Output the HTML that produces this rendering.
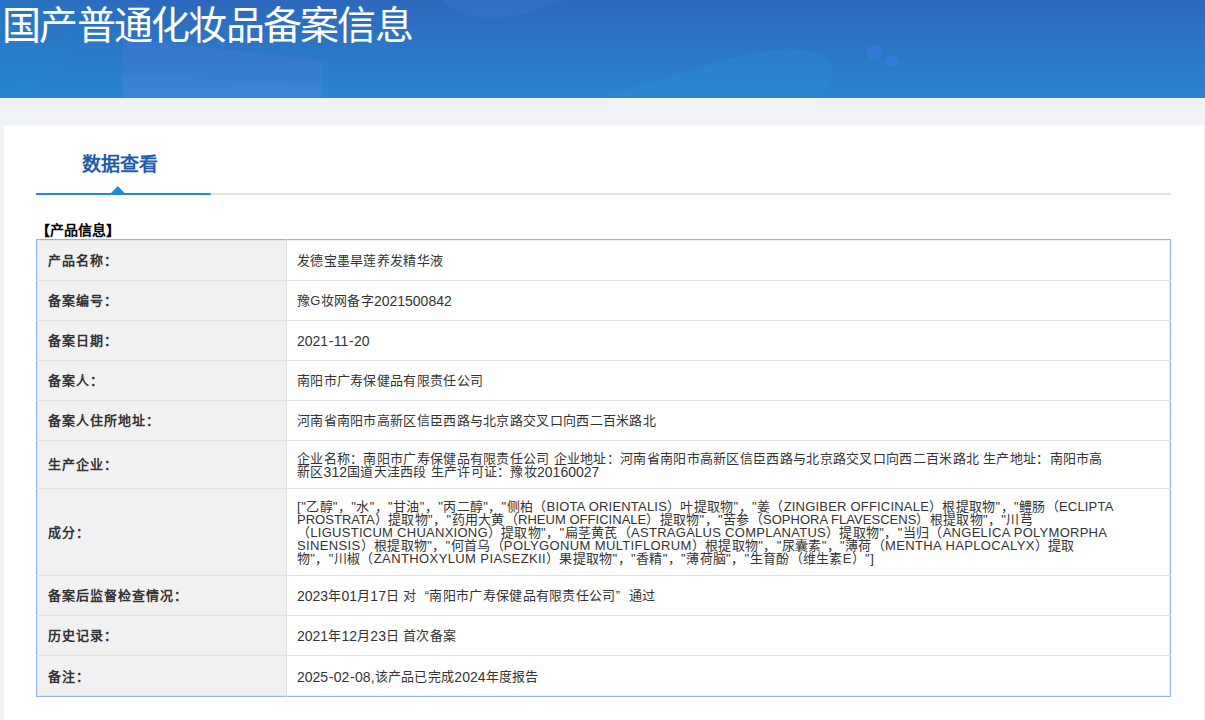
<!DOCTYPE html>
<html lang="zh-CN"><head><meta charset="utf-8">
<style>
*{margin:0;padding:0;box-sizing:border-box}
html,body{width:1205px;height:720px;overflow:hidden}
body{background:#eff3f6;font-family:"Liberation Sans",sans-serif;color:#333;position:relative;text-spacing-trim:space-all}
.hd{position:absolute;left:0;top:0;width:1205px;height:98px;overflow:hidden;
background:linear-gradient(180deg,#2d68bc 0%,#2b79c9 55%,#2a84d1 100%)}
.hd svg{position:absolute;left:0;top:0}
.hd h1{position:absolute;left:2px;top:4px;font-size:39px;letter-spacing:-1.75px;font-weight:normal;color:#fff;line-height:44px;white-space:nowrap}
.panel{position:absolute;left:4px;top:125px;width:1200px;height:620px;background:#fff}
.tabs{position:absolute;left:32px;top:68px;width:1135px;height:2px;background:#e4e4e4}
.tab{position:absolute;left:0;top:0;width:175px;height:2px;background:linear-gradient(90deg,#2a85d3 174px,#3fd2ef 174px)}
.tri{position:absolute;left:75px;top:-7px;display:block}
.tabt{position:absolute;left:78px;top:28px;font-size:19px;font-weight:bold;color:#1f5da8;line-height:24px;white-space:nowrap}
.sec{position:absolute;left:32px;top:96px;font-size:14px;font-weight:bold;color:#000;line-height:18px;white-space:nowrap}
table{position:absolute;left:32px;top:114px;width:1135px;border-collapse:collapse;border:1px solid #92b4e4}
.tbin{position:absolute;left:33px;top:115px;width:1133px;height:456px;border:1px solid rgba(200,195,185,0.25);pointer-events:none}
td{line-height:13px;padding:0;font-size:13px;white-space:nowrap}
tr+tr td{border-top:1px solid #e2e2e2}
td.l{width:250px;background:#f1f1f1;font-weight:bold;font-size:13px;letter-spacing:1.05px;color:#333;padding-left:11px;border-right:1px solid #e2e2e2}
td.v{padding-left:10px;color:#333}
.ln{letter-spacing:0.3px}
.ln i{font-style:normal}
.ln i.d{font-size:14px;letter-spacing:0px;position:relative;top:1px}
.ln i.d u{text-decoration:none;margin:0 0.5px}
.ln{--ax:0px}
.ln i.a{font-size:13px;letter-spacing:calc(0.24px + var(--ax))}
.ln i.q{font-size:13px;letter-spacing:0.47px;margin-left:0px}
.ln i.k{font-size:13px;letter-spacing:0.5px}
.ln b{font-weight:normal;display:inline-block;width:13px}
.ln b.ql{text-align:right}
.ln b.qr{text-align:left}
</style></head><body>
<div class="hd">
<svg width="1205" height="98" viewBox="0 0 1205 98">
<defs><linearGradient id='lt' x1='0' y1='0' x2='1' y2='0'><stop offset='0' stop-color='#1f8ad0' stop-opacity='0.35'/><stop offset='1' stop-color='#1f8ad0' stop-opacity='0'/></linearGradient></defs><rect x='0' y='0' width='160' height='98' fill='url(#lt)'/><polygon points='123,38 322,60 322,98 123,98' fill='rgba(100,125,235,0.2)'/><polygon points='123,75 322,85 322,98 123,98' fill='rgba(90,150,240,0.12)'/><path d='M442,0 C455,12 470,18 492,18 C520,18 545,8 566,0 Z' fill='rgba(70,130,215,0.22)'/><path d='M600,98 C680,75 740,50 790,49 C825,49 838,65 832,80 C828,90 822,95 815,98 Z' fill='rgba(45,140,215,0.35)'/><circle cx='874' cy='53' r='7.5' fill='rgba(60,125,230,0.55)'/><circle cx='892' cy='61.5' r='6' fill='rgba(60,125,230,0.55)'/>
</svg>
<h1>国产普通化妆品备案信息</h1></div>
<div class="panel">
  <div class="tabt">数据查看</div>
  <div class="tabs"><div class="tab"><svg class="tri" width="14" height="7" viewBox="0 0 14 7"><polygon points="0,7 6.8,0 13.6,7" fill="#2589d8"/></svg></div></div>
  <div class="sec">【产品信息】</div>
  <table>
    <tr style="height:41px"><td class="l">产品名称：</td><td class="v"><span class="ln">发德宝墨旱莲养发精华液</span></td></tr>
    <tr style="height:40px"><td class="l">备案编号：</td><td class="v"><span class="ln">豫<i class="a">G</i>妆网备字<i class="d">2021500842</i></span></td></tr>
    <tr style="height:40px"><td class="l">备案日期：</td><td class="v"><span class="ln"><i class="d">2021<u>-</u>11<u>-</u>20</i></span></td></tr>
    <tr style="height:40px"><td class="l">备案人：</td><td class="v"><span class="ln">南阳市广寿保健品有限责任公司</span></td></tr>
    <tr style="height:40px"><td class="l">备案人住所地址：</td><td class="v"><span class="ln">河南省南阳市高新区信臣西路与北京路交叉口向西二百米路北</span></td></tr>
    <tr style="height:48px"><td class="l">生产企业：</td><td class="v"><span class="ln">企业名称：南阳市广寿保健品有限责任公司<i class="a"> </i>企业地址：河南省南阳市高新区信臣西路与北京路交叉口向西二百米路北<i class="a"> </i>生产地址：南阳市高</span><br><span class="ln">新区<i class="d">312</i>国道天洼西段<i class="a"> </i>生产许可证：豫妆<i class="d">20160027</i></span></td></tr>
    <tr style="height:87px"><td class="l">成分：</td><td class="v"><span class="ln" style="--ax:-0.04px"><i class="k">[</i><i class="q">"</i>乙醇<i class="q">"</i>，<i class="q">"</i>水<i class="q">"</i>，<i class="q">"</i>甘油<i class="q">"</i>，<i class="q">"</i>丙二醇<i class="q">"</i>，<i class="q">"</i>侧柏（<i class="a">BIOTA ORIENTALIS</i>）叶提取物<i class="q">"</i>，<i class="q">"</i>姜（<i class="a">ZINGIBER OFFICINALE</i>）根提取物<i class="q">"</i>，<i class="q">"</i>鳢肠（<i class="a">ECLIPTA</i></span><br><span class="ln" style="--ax:-0.21px"><i class="a">PROSTRATA</i>）提取物<i class="q">"</i>，<i class="q">"</i>药用大黄（<i class="a">RHEUM OFFICINALE</i>）提取物<i class="q">"</i>，<i class="q">"</i>苦参（<i class="a">SOPHORA FLAVESCENS</i>）根提取物<i class="q">"</i>，<i class="q">"</i>川芎</span><br><span class="ln" style="--ax:0.03px">（<i class="a">LIGUSTICUM CHUANXIONG</i>）提取物<i class="q">"</i>，<i class="q">"</i>扁茎黄芪（<i class="a">ASTRAGALUS COMPLANATUS</i>）提取物<i class="q">"</i>，<i class="q">"</i>当归（<i class="a">ANGELICA POLYMORPHA</i></span><br><span class="ln" style="--ax:0.13px"><i class="a">SINENSIS</i>）根提取物<i class="q">"</i>，<i class="q">"</i>何首乌（<i class="a">POLYGONUM MULTIFLORUM</i>）根提取物<i class="q">"</i>，<i class="q">"</i>尿囊素<i class="q">"</i>，<i class="q">"</i>薄荷（<i class="a">MENTHA HAPLOCALYX</i>）提取</span><br><span class="ln" style="--ax:0.16px">物<i class="q">"</i>，<i class="q">"</i>川椒（<i class="a">ZANTHOXYLUM PIASEZKII</i>）果提取物<i class="q">"</i>，<i class="q">"</i>香精<i class="q">"</i>，<i class="q">"</i>薄荷脑<i class="q">"</i>，<i class="q">"</i>生育酚（维生素<i class="a">E</i>）<i class="q">"</i><i class="k">]</i></span></td></tr>
    <tr style="height:40px"><td class="l">备案后监督检查情况：</td><td class="v"><span class="ln"><i class="d">2023</i>年<i class="d">01</i>月<i class="d">17</i>日<i class="a"> </i>对<b class="ql">“</b>南阳市广寿保健品有限责任公司<b class="qr">”</b>通过</span></td></tr>
    <tr style="height:40px"><td class="l">历史记录：</td><td class="v"><span class="ln"><i class="d">2021</i>年<i class="d">12</i>月<i class="d">23</i>日<i class="a"> </i>首次备案</span></td></tr>
    <tr style="height:41px"><td class="l">备注：</td><td class="v"><span class="ln"><i class="d">2025<u>-</u>02<u>-</u>08,</i>该产品已完成<i class="d">2024</i>年度报告</span></td></tr>
  </table>
  <div class="tbin"></div>
</div>
</body></html>
